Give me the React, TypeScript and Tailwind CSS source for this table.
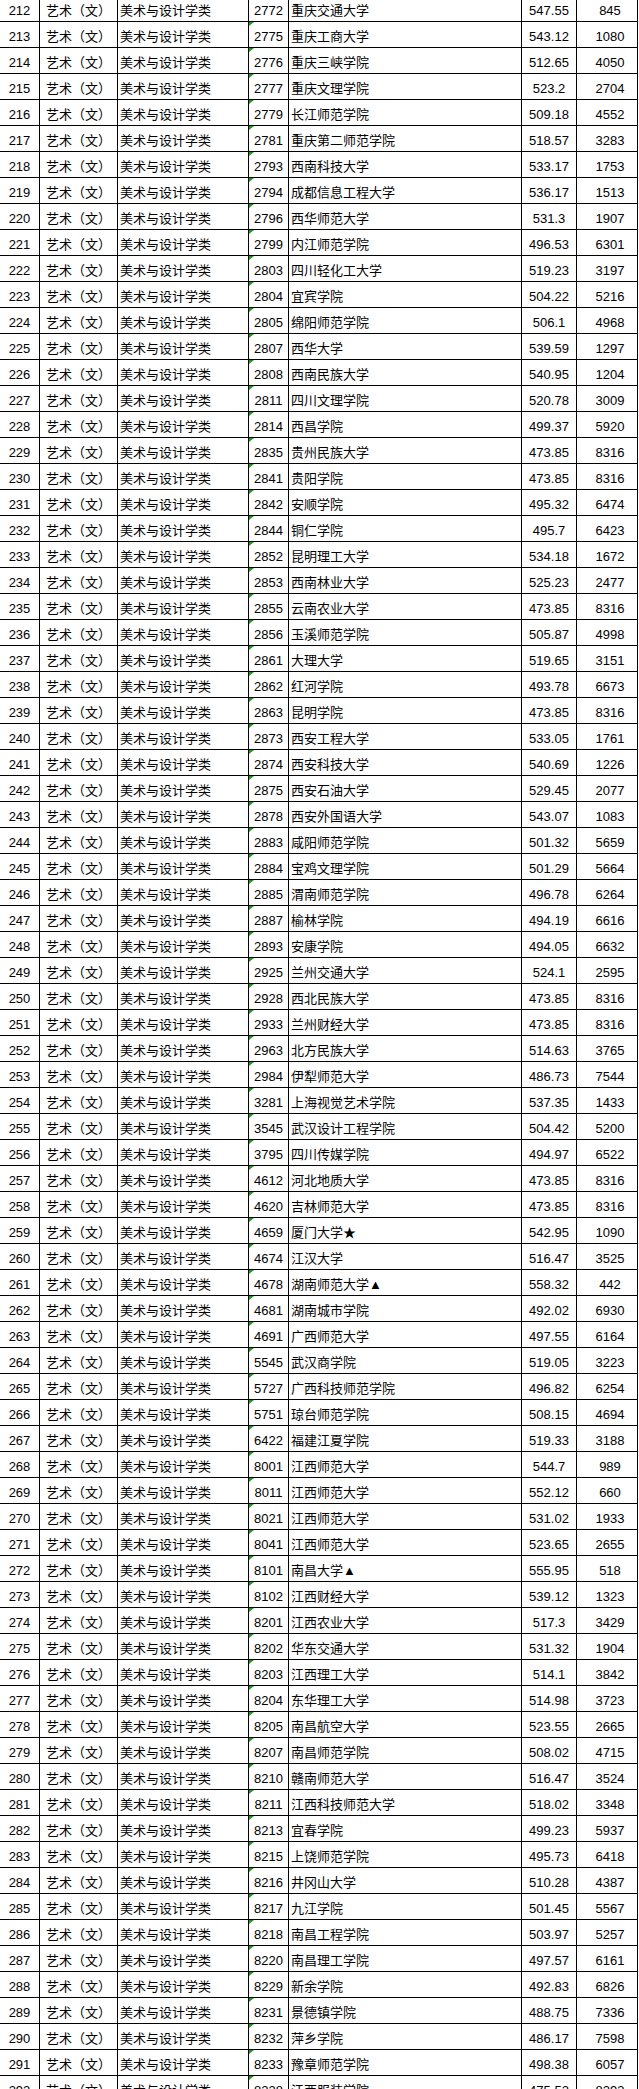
import React from 'react';

type Row = [number, string, string, string, string];

// seq, code, school, score, rank
const rows: Row[] = [
    [212, '2772', '重庆交通大学', '547.55', '845'],
    [213, '2775', '重庆工商大学', '543.12', '1080'],
    [214, '2776', '重庆三峡学院', '512.65', '4050'],
    [215, '2777', '重庆文理学院', '523.2', '2704'],
    [216, '2779', '长江师范学院', '509.18', '4552'],
    [217, '2781', '重庆第二师范学院', '518.57', '3283'],
    [218, '2793', '西南科技大学', '533.17', '1753'],
    [219, '2794', '成都信息工程大学', '536.17', '1513'],
    [220, '2796', '西华师范大学', '531.3', '1907'],
    [221, '2799', '内江师范学院', '496.53', '6301'],
    [222, '2803', '四川轻化工大学', '519.23', '3197'],
    [223, '2804', '宜宾学院', '504.22', '5216'],
    [224, '2805', '绵阳师范学院', '506.1', '4968'],
    [225, '2807', '西华大学', '539.59', '1297'],
    [226, '2808', '西南民族大学', '540.95', '1204'],
    [227, '2811', '四川文理学院', '520.78', '3009'],
    [228, '2814', '西昌学院', '499.37', '5920'],
    [229, '2835', '贵州民族大学', '473.85', '8316'],
    [230, '2841', '贵阳学院', '473.85', '8316'],
    [231, '2842', '安顺学院', '495.32', '6474'],
    [232, '2844', '铜仁学院', '495.7', '6423'],
    [233, '2852', '昆明理工大学', '534.18', '1672'],
    [234, '2853', '西南林业大学', '525.23', '2477'],
    [235, '2855', '云南农业大学', '473.85', '8316'],
    [236, '2856', '玉溪师范学院', '505.87', '4998'],
    [237, '2861', '大理大学', '519.65', '3151'],
    [238, '2862', '红河学院', '493.78', '6673'],
    [239, '2863', '昆明学院', '473.85', '8316'],
    [240, '2873', '西安工程大学', '533.05', '1761'],
    [241, '2874', '西安科技大学', '540.69', '1226'],
    [242, '2875', '西安石油大学', '529.45', '2077'],
    [243, '2878', '西安外国语大学', '543.07', '1083'],
    [244, '2883', '咸阳师范学院', '501.32', '5659'],
    [245, '2884', '宝鸡文理学院', '501.29', '5664'],
    [246, '2885', '渭南师范学院', '496.78', '6264'],
    [247, '2887', '榆林学院', '494.19', '6616'],
    [248, '2893', '安康学院', '494.05', '6632'],
    [249, '2925', '兰州交通大学', '524.1', '2595'],
    [250, '2928', '西北民族大学', '473.85', '8316'],
    [251, '2933', '兰州财经大学', '473.85', '8316'],
    [252, '2963', '北方民族大学', '514.63', '3765'],
    [253, '2984', '伊犁师范大学', '486.73', '7544'],
    [254, '3281', '上海视觉艺术学院', '537.35', '1433'],
    [255, '3545', '武汉设计工程学院', '504.42', '5200'],
    [256, '3795', '四川传媒学院', '494.97', '6522'],
    [257, '4612', '河北地质大学', '473.85', '8316'],
    [258, '4620', '吉林师范大学', '473.85', '8316'],
    [259, '4659', '厦门大学★', '542.95', '1090'],
    [260, '4674', '江汉大学', '516.47', '3525'],
    [261, '4678', '湖南师范大学▲', '558.32', '442'],
    [262, '4681', '湖南城市学院', '492.02', '6930'],
    [263, '4691', '广西师范大学', '497.55', '6164'],
    [264, '5545', '武汉商学院', '519.05', '3223'],
    [265, '5727', '广西科技师范学院', '496.82', '6254'],
    [266, '5751', '琼台师范学院', '508.15', '4694'],
    [267, '6422', '福建江夏学院', '519.33', '3188'],
    [268, '8001', '江西师范大学', '544.7', '989'],
    [269, '8011', '江西师范大学', '552.12', '660'],
    [270, '8021', '江西师范大学', '531.02', '1933'],
    [271, '8041', '江西师范大学', '523.65', '2655'],
    [272, '8101', '南昌大学▲', '555.95', '518'],
    [273, '8102', '江西财经大学', '539.12', '1323'],
    [274, '8201', '江西农业大学', '517.3', '3429'],
    [275, '8202', '华东交通大学', '531.32', '1904'],
    [276, '8203', '江西理工大学', '514.1', '3842'],
    [277, '8204', '东华理工大学', '514.98', '3723'],
    [278, '8205', '南昌航空大学', '523.55', '2665'],
    [279, '8207', '南昌师范学院', '508.02', '4715'],
    [280, '8210', '赣南师范大学', '516.47', '3524'],
    [281, '8211', '江西科技师范大学', '518.02', '3348'],
    [282, '8213', '宜春学院', '499.23', '5937'],
    [283, '8215', '上饶师范学院', '495.73', '6418'],
    [284, '8216', '井冈山大学', '510.28', '4387'],
    [285, '8217', '九江学院', '501.45', '5567'],
    [286, '8218', '南昌工程学院', '503.97', '5257'],
    [287, '8220', '南昌理工学院', '497.57', '6161'],
    [288, '8229', '新余学院', '492.83', '6826'],
    [289, '8231', '景德镇学院', '488.75', '7336'],
    [290, '8232', '萍乡学院', '486.17', '7598'],
    [291, '8233', '豫章师范学院', '498.38', '6057'],
    [292, '8238', '江西服装学院', '475.52', '8293'],
];

const cell = 'h-full border-r border-black pt-[4px] leading-[21px] whitespace-nowrap overflow-hidden';

export default function App() {
    return (
        <div
            className="bg-white w-[639px] h-[2089px] overflow-hidden text-[13px] text-black"
            style={{ fontFamily: '"Liberation Sans", Arial, "Noto Sans CJK SC", sans-serif' }}
        >
            <div className="-mt-[4px] w-[638px]">
                {rows.map(([seq, code, school, score, rank]) => (
                    <div key={seq} className="flex h-[26px] border-b border-black">
                        <div className={`${cell} w-[40px] text-center`}>{seq}</div>
                        <div className={`${cell} w-[78px] text-center`}>艺术（文）</div>
                        <div className={`${cell} w-[131px] pl-[2px]`}>美术与设计学类</div>
                        <div className={`${cell} relative w-[40px] text-center`}>
                            {/* excel "number as text" marker */}
                            <span className="absolute left-0 top-0 w-0 h-0 border-t-[4px] border-t-[#1a9a1a] border-r-[5px] border-r-transparent" />
                            {code}
                        </div>
                        <div className={`${cell} w-[233px] pl-[2px]`}>{school}</div>
                        <div className={`${cell} w-[55px] text-center`}>{score}</div>
                        <div className={`${cell} w-[61px] text-center pl-[6px]`}>{rank}</div>
                    </div>
                ))}
            </div>
        </div>
    );
}
